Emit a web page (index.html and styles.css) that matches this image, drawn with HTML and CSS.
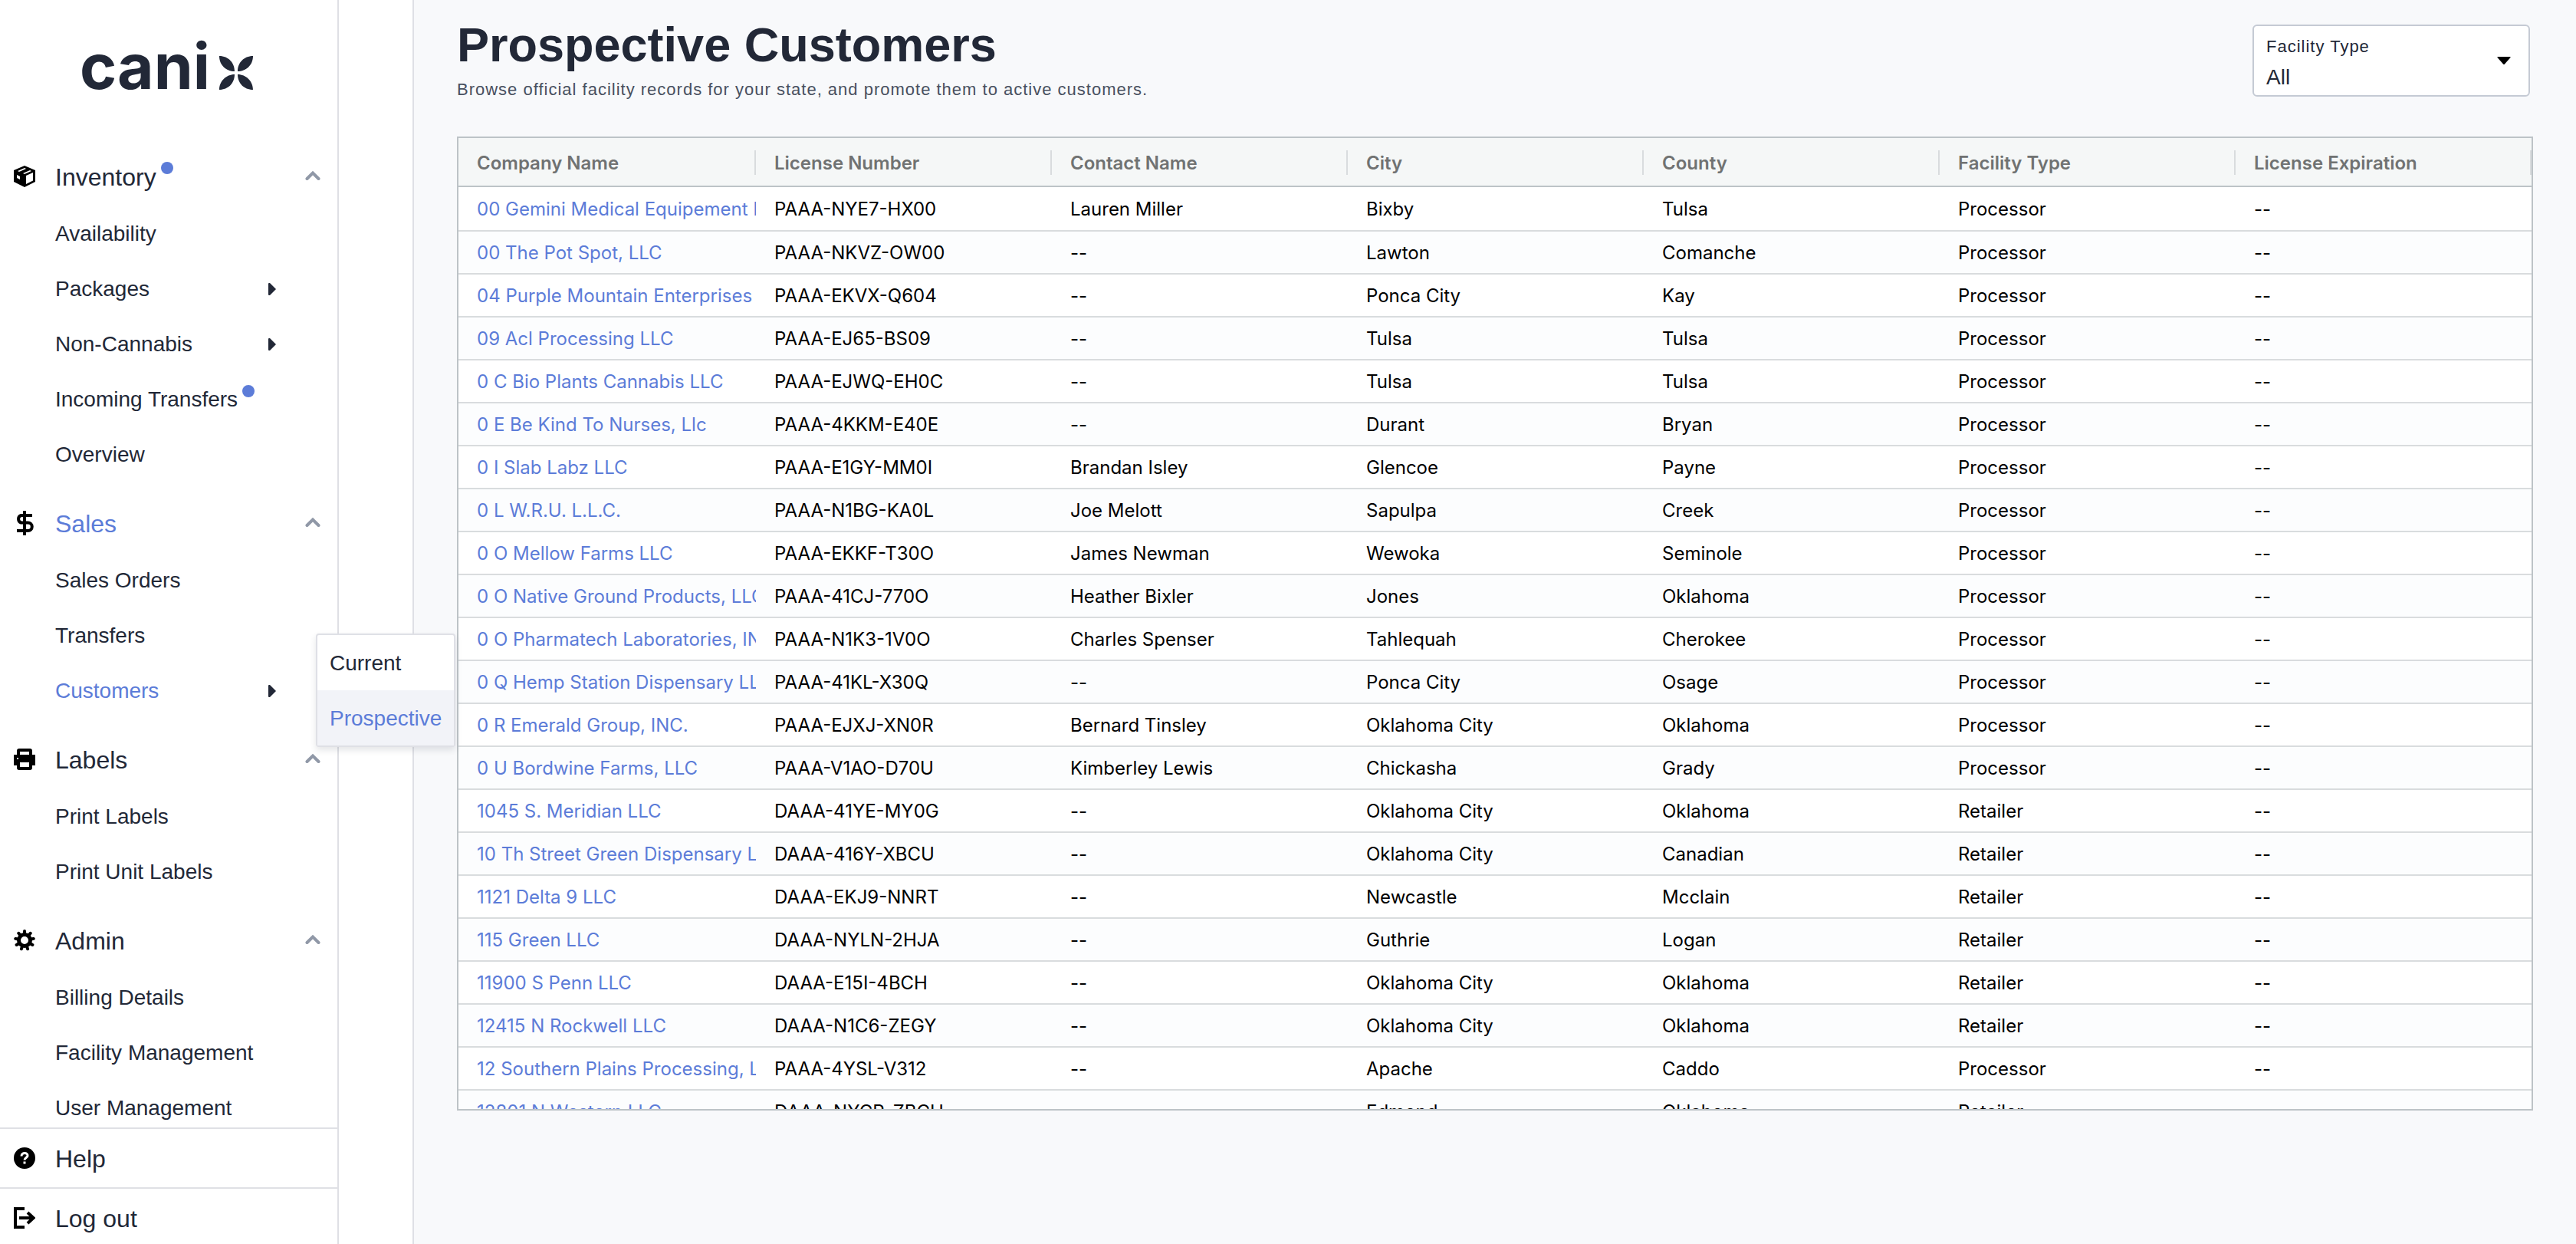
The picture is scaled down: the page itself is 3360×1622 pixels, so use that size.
FILE: index.html
```html
<!DOCTYPE html>
<html lang="en">
<head>
    <meta charset="UTF-8">
    <meta name="viewport" content="width=device-width, initial-scale=1.0">
    <title>Prospective Customers</title>
    <link rel="stylesheet" href="styles.css">
</head>
<body>
    <svg class="sprite" aria-hidden="true">
        <symbol id="chevron" viewBox="0 0 20 14">
            <path d="M2.5 11 10 3.5 17.500 11" fill="none" stroke="currentColor" stroke-width="4" stroke-linecap="round" stroke-linejoin="miter"/>
        </symbol>
        <symbol id="caret" viewBox="0 0 10 16">
            <path d="M0 1Q0 0 1 0L2 0 10 8 2 16H1Q0 16 0 15Z" fill="currentColor"/>
        </symbol>
    </svg>

    <aside class="sidebar">
        <a class="logo" href="#" aria-label="canix">
            <span>cani</span>
            <svg class="logo-x" viewBox="0 0 44 44">
                <path d="M0 0C12 0 20 9 20 20C9 20 0 12 0 0ZM44 0C32 0 24 9 24 20C35 20 44 12 44 0ZM0 44C0 33 9 24 20 24C20 35 12 44 0 44ZM44 44C44 33 35 24 24 24C24 35 32 44 44 44Z" fill="currentColor"/>
            </svg>
        </a>

        <nav class="nav">
            <section class="group">
                <button class="group-title" type="button">
                    <svg class="icon" viewBox="0 0 28 28">
                        <path d="M14 0 28 6V21L14 28 0 21V6Z"/>
                        <path fill="#fff" d="M16 13 25 9V19.500L16 24ZM4 12 8 14V18L4 16ZM5 7 14 3 16 4 7 8ZM12 10 21 6 23 7 14 11Z"/>
                    </svg>
                    <span>Inventory</span><i class="dot"></i>
                    <svg class="chevron"><use href="#chevron"/></svg>
                </button>
                <ul>
                    <li><a href="#">Availability</a></li>
                    <li><a href="#">Packages<svg class="caret"><use href="#caret"/></svg></a></li>
                    <li><a href="#">Non-Cannabis<svg class="caret"><use href="#caret"/></svg></a></li>
                    <li><a href="#">Incoming Transfers<i class="dot"></i></a></li>
                    <li><a href="#">Overview</a></li>
                </ul>
            </section>

            <section class="group">
                <button class="group-title active" type="button">
                    <svg class="icon icon-dollar" viewBox="0 0 28 32">
                        <path d="M24 6H9.500A5 5 0 0 0 9.500 15.500H18.500A5.200 5.200 0 0 1 18.500 26H4M14 0V32" fill="none" stroke="#000" stroke-width="4"/>
                    </svg>
                    <span>Sales</span>
                    <svg class="chevron"><use href="#chevron"/></svg>
                </button>
                <ul>
                    <li><a href="#">Sales Orders</a></li>
                    <li><a href="#">Transfers</a></li>
                    <li>
                        <a class="active" href="#">Customers<svg class="caret"><use href="#caret"/></svg></a>
                        <ul class="submenu">
                            <li><a href="#">Current</a></li>
                            <li><a class="active" href="#">Prospective</a></li>
                        </ul>
                    </li>
                </ul>
            </section>

            <section class="group">
                <button class="group-title" type="button">
                    <svg class="icon" viewBox="0 0 28 28">
                        <path d="M4 3Q4 0 7 0H21Q24 0 24 3V8H28V22H24V25Q24 28 21 28H7Q4 28 4 25V22H0V8H4Z"/>
                        <path fill="#fff" d="M8 4H20V8H8ZM8 18H20V24H8ZM4 12H6V14H4Z"/>
                    </svg>
                    <span>Labels</span>
                    <svg class="chevron"><use href="#chevron"/></svg>
                </button>
                <ul>
                    <li><a href="#">Print Labels</a></li>
                    <li><a href="#">Print Unit Labels</a></li>
                </ul>
            </section>

            <section class="group">
                <button class="group-title" type="button">
                    <svg class="icon" viewBox="0 0 28 28">
                        <circle cx="14" cy="14" r="7.500" fill="none" stroke="#000" stroke-width="5"/>
                        <path d="M14 2V5M21.700 4.800 19.500 7.500M25.800 11.900 22.500 12.500M24.400 20 21.500 18.300M18.100 25.300 17.200 22.500M9.900 25.300 10.800 22.500M3.600 20 6.500 18.300M2.200 11.900 5.500 12.500M6.300 4.800 8.500 7.500" stroke="#000" stroke-width="4" stroke-linecap="round"/>
                    </svg>
                    <span>Admin</span>
                    <svg class="chevron"><use href="#chevron"/></svg>
                </button>
                <ul>
                    <li><a href="#">Billing Details</a></li>
                    <li><a href="#">Facility Management</a></li>
                    <li><a href="#">User Management</a></li>
                </ul>
            </section>
        </nav>

        <div class="sidebar-footer">
            <a class="group-title" href="#">
                <svg class="icon" viewBox="0 0 28 28">
                    <circle cx="14" cy="14" r="14"/>
                    <path d="M10 11.500C10 6 18.500 6.500 18 11C17.700 13.500 14 13.500 14 16.500" fill="none" stroke="#fff" stroke-width="3"/>
                    <path d="M12.500 18.500H15.500V21.500H12.500Z" fill="#fff"/>
                </svg>
                <span>Help</span>
            </a>
            <a class="group-title" href="#">
                <svg class="icon" viewBox="0 0 28 28">
                    <path d="M14 2H2V26H14M7 14H25M18 7 25.500 14 18 21" fill="none" stroke="#000" stroke-width="4"/>
                </svg>
                <span>Log out</span>
            </a>
        </div>
    </aside>

    <div class="rail"></div>

    <main class="main">
        <header class="page-header">
            <div>
                <h1>Prospective Customers</h1>
                <p class="caption">Browse official facility records for your state, and promote them to active customers.</p>
            </div>
            <div class="field">
                <select id="facilityType">
                    <option>All</option>
                    <option>Processor</option>
                    <option>Retailer</option>
                </select>
                <label class="caption" for="facilityType">Facility Type</label>
                <svg class="field-arrow" viewBox="0 0 18 10"><path d="M1 0H17Q18 0 17.500 1L10 9.500Q9 10.500 8 9.500L.5 1Q0 0 1 0Z"/></svg>
            </div>
        </header>

        <div class="grid">
            <table>
                <thead>
                    <tr>
                        <th class="col-company"><span>Company Name</span></th>
                        <th><span>License Number</span></th>
                        <th><span>Contact Name</span></th>
                        <th><span>City</span></th>
                        <th><span>County</span></th>
                        <th><span>Facility Type</span></th>
                        <th><span>License Expiration</span></th>
                    </tr>
                </thead>
                <tbody>
                    <tr><td><a href="#">00 Gemini Medical Equipement LLC</a></td><td>PAAA-NYE7-HX00</td><td>Lauren Miller</td><td>Bixby</td><td>Tulsa</td><td>Processor</td><td>--</td></tr>
                    <tr><td><a href="#">00 The Pot Spot, LLC</a></td><td>PAAA-NKVZ-OW00</td><td>--</td><td>Lawton</td><td>Comanche</td><td>Processor</td><td>--</td></tr>
                    <tr><td><a href="#">04 Purple Mountain Enterprises</a></td><td>PAAA-EKVX-Q604</td><td>--</td><td>Ponca City</td><td>Kay</td><td>Processor</td><td>--</td></tr>
                    <tr><td><a href="#">09 Acl Processing LLC</a></td><td>PAAA-EJ65-BS09</td><td>--</td><td>Tulsa</td><td>Tulsa</td><td>Processor</td><td>--</td></tr>
                    <tr><td><a href="#">0 C Bio Plants Cannabis LLC</a></td><td>PAAA-EJWQ-EH0C</td><td>--</td><td>Tulsa</td><td>Tulsa</td><td>Processor</td><td>--</td></tr>
                    <tr><td><a href="#">0 E Be Kind To Nurses, Llc</a></td><td>PAAA-4KKM-E40E</td><td>--</td><td>Durant</td><td>Bryan</td><td>Processor</td><td>--</td></tr>
                    <tr><td><a href="#">0 I Slab Labz LLC</a></td><td>PAAA-E1GY-MM0I</td><td>Brandan Isley</td><td>Glencoe</td><td>Payne</td><td>Processor</td><td>--</td></tr>
                    <tr><td><a href="#">0 L W.R.U. L.L.C.</a></td><td>PAAA-N1BG-KA0L</td><td>Joe Melott</td><td>Sapulpa</td><td>Creek</td><td>Processor</td><td>--</td></tr>
                    <tr><td><a href="#">0 O Mellow Farms LLC</a></td><td>PAAA-EKKF-T30O</td><td>James Newman</td><td>Wewoka</td><td>Seminole</td><td>Processor</td><td>--</td></tr>
                    <tr><td><a href="#">0 O Native Ground Products, LLC</a></td><td>PAAA-41CJ-770O</td><td>Heather Bixler</td><td>Jones</td><td>Oklahoma</td><td>Processor</td><td>--</td></tr>
                    <tr><td><a href="#">0 O Pharmatech Laboratories, INC.</a></td><td>PAAA-N1K3-1V0O</td><td>Charles Spenser</td><td>Tahlequah</td><td>Cherokee</td><td>Processor</td><td>--</td></tr>
                    <tr><td><a href="#">0 Q Hemp Station Dispensary LLC</a></td><td>PAAA-41KL-X30Q</td><td>--</td><td>Ponca City</td><td>Osage</td><td>Processor</td><td>--</td></tr>
                    <tr><td><a href="#">0 R Emerald Group, INC.</a></td><td>PAAA-EJXJ-XN0R</td><td>Bernard Tinsley</td><td>Oklahoma City</td><td>Oklahoma</td><td>Processor</td><td>--</td></tr>
                    <tr><td><a href="#">0 U Bordwine Farms, LLC</a></td><td>PAAA-V1AO-D70U</td><td>Kimberley Lewis</td><td>Chickasha</td><td>Grady</td><td>Processor</td><td>--</td></tr>
                    <tr><td><a href="#">1045 S. Meridian LLC</a></td><td>DAAA-41YE-MY0G</td><td>--</td><td>Oklahoma City</td><td>Oklahoma</td><td>Retailer</td><td>--</td></tr>
                    <tr><td><a href="#">10 Th Street Green Dispensary LLC</a></td><td>DAAA-416Y-XBCU</td><td>--</td><td>Oklahoma City</td><td>Canadian</td><td>Retailer</td><td>--</td></tr>
                    <tr><td><a href="#">1121 Delta 9 LLC</a></td><td>DAAA-EKJ9-NNRT</td><td>--</td><td>Newcastle</td><td>Mcclain</td><td>Retailer</td><td>--</td></tr>
                    <tr><td><a href="#">115 Green LLC</a></td><td>DAAA-NYLN-2HJA</td><td>--</td><td>Guthrie</td><td>Logan</td><td>Retailer</td><td>--</td></tr>
                    <tr><td><a href="#">11900 S Penn LLC</a></td><td>DAAA-E15I-4BCH</td><td>--</td><td>Oklahoma City</td><td>Oklahoma</td><td>Retailer</td><td>--</td></tr>
                    <tr><td><a href="#">12415 N Rockwell LLC</a></td><td>DAAA-N1C6-ZEGY</td><td>--</td><td>Oklahoma City</td><td>Oklahoma</td><td>Retailer</td><td>--</td></tr>
                    <tr><td><a href="#">12 Southern Plains Processing, LLC</a></td><td>PAAA-4YSL-V312</td><td>--</td><td>Apache</td><td>Caddo</td><td>Processor</td><td>--</td></tr>
                    <tr><td><a href="#">12801 N Western LLC</a></td><td>DAAA-NYCR-ZBCU</td><td>--</td><td>Edmond</td><td>Oklahoma</td><td>Retailer</td><td>--</td></tr>
                </tbody>
            </table>
        </div>
    </main>
</body>
</html>
```

FILE: styles.css
```css
* {
    box-sizing: border-box;
}

body {
    margin: 0;
    height: 100vh;
    display: flex;
    overflow: hidden;
    background: #f8f9fb;
    color: #222837;
    font-family: 'Liberation Sans', Helvetica, Arial, sans-serif;
    font-size: 28px;
}

ul {
    list-style: none;
    margin: 0;
    padding: 0;
}

a {
    color: inherit;
    text-decoration: none;
}

.sprite {
    display: none;
}

/* Sidebar */

.sidebar {
    flex: none;
    width: 442px;
    display: flex;
    flex-direction: column;
    background: #fff;
    border-right: 2px solid #dfe0e5;
}

.logo {
    flex: none;
    height: 192px;
    padding: 0 0 18px 104px;
    display: flex;
    align-items: center;
    font-family: Inter, sans-serif;
    font-size: 82px;
    font-weight: 700;
    line-height: 96px;
}

.logo-x {
    width: 44px;
    height: 44px;
    margin: 16px 0 0 12px;
}

.nav {
    flex: 1;
    min-height: 0;
}

.group {
    margin-bottom: 16px;
}

.group-title {
    width: 100%;
    height: 76px;
    padding: 0 22px 0 18px;
    border: 0;
    background: none;
    display: flex;
    align-items: center;
    color: inherit;
    font: inherit;
    font-size: 32px;
    cursor: pointer;
}

.group-title span {
    padding-top: 2px;
}

.icon {
    width: 28px;
    height: 28px;
    margin-right: 26px;
}

.icon-dollar {
    height: 32px;
}

.chevron {
    width: 20px;
    height: 14px;
    margin: 0 0 2px auto;
    color: #9098a7;
}

.dot {
    width: 16px;
    height: 16px;
    margin: 0 0 22px 6px;
    border-radius: 50%;
    background: #5c7cd8;
}

.group li {
    position: relative;
}

.group li a {
    height: 72px;
    padding: 2px 80px 0 72px;
    display: flex;
    align-items: center;
    white-space: nowrap;
}

.caret {
    width: 10px;
    height: 16px;
    margin-left: auto;
    color: #222837;
}

.group .active {
    color: #5c7cd8;
}

.group .submenu {
    position: absolute;
    top: -38px;
    left: 412px;
    z-index: 2;
    background: #fff;
    border: 2px solid #dfe0e6;
    border-radius: 4px;
    box-shadow: 0 4px 8px rgba(34, 40, 55, 0.12);
}

.group .submenu a {
    padding: 2px 16px 0;
}

.group .submenu .active {
    background: #f2f3f8;
}

.sidebar-footer {
    position: relative;
    flex: none;
    margin-bottom: -4px;
    background: #fff;
}

.sidebar-footer .group-title {
    height: 78px;
    border-top: 2px solid #dfe0e5;
}

.rail {
    flex: none;
    width: 98px;
    background: #fff;
    border-right: 2px solid #dfe0e5;
}

/* Page */

.main {
    flex: 1;
    min-width: 0;
    padding: 22px 56px 0;
}

.page-header {
    min-height: 156px;
    padding-right: 4px;
    display: flex;
    justify-content: space-between;
    align-items: flex-start;
}

h1 {
    margin: 0 0 8px;
    font-size: 63px;
    line-height: 72px;
}

.caption {
    margin: 0;
    font-size: 22px;
    line-height: 30px;
    letter-spacing: 1px;
}

p.caption {
    color: #485060;
}

.field {
    width: 362px;
    margin-top: 10px;
    display: grid;
}

.field > * {
    grid-area: 1 / 1;
}

.field select {
    appearance: none;
    height: 94px;
    padding: 49px 16px 7px;
    border: 2px solid #c5cad4;
    border-radius: 6px;
    background: #fff;
    color: inherit;
    font: inherit;
}

.field label {
    padding: 14px 18px;
    pointer-events: none;
}

.field-arrow {
    width: 18px;
    height: 10px;
    margin-right: 25px;
    place-self: center end;
    pointer-events: none;
}

/* Grid */

.grid {
    height: calc(100vh - 352px);
    overflow: hidden;
    background: #fff;
    border: 2px solid #bdc3c7;
    font-family: Inter, sans-serif;
    font-size: 24px;
}

table {
    width: 100%;
    table-layout: fixed;
    border-collapse: separate;
    border-spacing: 0;
}

th {
    height: 64px;
    padding: 2px 0 0 24px;
    border-bottom: 2px solid #bdc3c7;
    background: #f5f7f7;
    color: #707272;
    font-weight: 600;
    text-align: left;
}

.col-company {
    width: 388px;
}

th span {
    display: block;
    height: 32px;
    border-right: 2px solid #d9dcde;
    line-height: 34px;
}

td {
    height: 56px;
    padding: 0 0 0 24px;
    overflow: hidden;
    border-bottom: 2px solid #d9dcde;
    color: #000;
    white-space: nowrap;
}

td a {
    display: block;
    overflow: hidden;
    color: #5c7cd8;
}

tbody tr:first-child td {
    height: 58px;
}

tbody tr:nth-child(even) {
    background: #fcfdfe;
}
```
